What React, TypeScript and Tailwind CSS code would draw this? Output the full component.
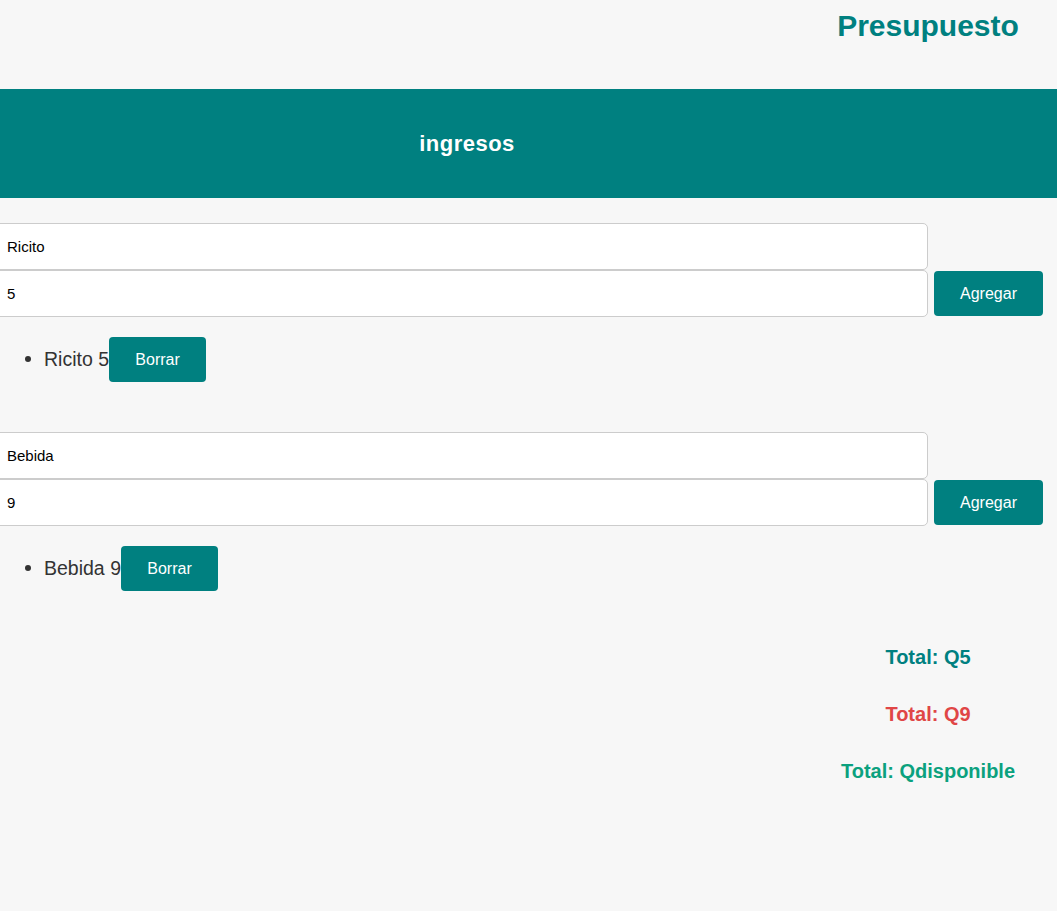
import { useState } from "react";

type Item = { name: string; amount: string };

function Section({
  initialName,
  initialAmount,
  items,
}: {
  initialName: string;
  initialAmount: string;
  items: Item[];
}) {
  const [name, setName] = useState(initialName);
  const [amount, setAmount] = useState(initialAmount);

  return (
    <div>
      <div className="flex items-end">
        <div className="flex flex-col w-[940px] -ml-[6px] pr-[6px]">
          <input
            value={name}
            onChange={(e) => setName(e.target.value)}
            className="h-[47px] rounded-[5px] border border-[#cccccc] bg-white pl-[12px] text-[15px] text-black outline-none"
          />
          <input
            value={amount}
            onChange={(e) => setAmount(e.target.value)}
            className="h-[47px] rounded-[5px] border border-[#cccccc] bg-white pl-[12px] text-[15px] text-black outline-none"
          />
        </div>
        <button className="mb-[1px] h-[45px] w-[109px] rounded-[4px] bg-[#008080] text-[16px] font-light text-white">
          Agregar
        </button>
      </div>
      <ul className="mt-[20px] list-disc pl-[44px] text-[#333333]">
        {items.map((it) => (
          <li key={it.name} className="text-[19.5px] marker:text-[#333333]">
            <span className="align-middle">
              {it.name} {it.amount}
            </span>
            <button className="h-[45px] w-[97px] rounded-[4px] bg-[#008080] align-middle text-[16px] font-light text-white">
              Borrar
            </button>
          </li>
        ))}
      </ul>
    </div>
  );
}

export default function App() {
  return (
    <div
      className="min-h-[911px] overflow-hidden bg-[#f7f7f7]"
      style={{ fontFamily: '"Liberation Sans", Arial, sans-serif' }}
    >
      {/* Title */}
      <div className="flex justify-end pr-[29px] pt-[8px]">
        <h1 className="w-[200px] text-center text-[30px] font-bold leading-[36px] text-[#008080]">
          Presupuesto
        </h1>
      </div>

      {/* Banner */}
      <div className="mt-[45px] flex h-[109px] items-center bg-[#008080]">
        <h2 className="w-[934px] text-center text-[22px] font-bold tracking-[0.5px] text-white">
          ingresos
        </h2>
      </div>

      <div className="mt-[25px]">
        <Section
          initialName="Ricito"
          initialAmount="5"
          items={[{ name: "Ricito", amount: "5" }]}
        />
      </div>

      <div className="mt-[50px]">
        <Section
          initialName="Bebida"
          initialAmount="9"
          items={[{ name: "Bebida", amount: "9" }]}
        />
      </div>

      {/* Totals */}
      <div className="mt-[56px] flex justify-end pr-[29px]">
        <div className="flex w-[200px] flex-col items-center gap-[36px] text-[20px] font-bold leading-[21px]">
          <p className="text-[#008080]">Total: Q5</p>
          <p className="text-[#e04646]">Total: Q9</p>
          <p className="text-[#0ba17e]">Total: Qdisponible</p>
        </div>
      </div>
    </div>
  );
}
